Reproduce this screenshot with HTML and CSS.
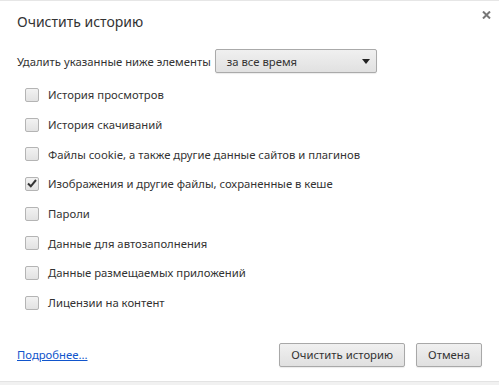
FILE: index.html
```html
<!DOCTYPE html>
<html lang="ru">
<head>
    <meta charset="UTF-8">
    <title>Очистить историю</title>
    <link rel="stylesheet" href="styles.css">
</head>
<body>
    <div class="dialog">
        <header class="dialog-header">
            <h1>Очистить историю</h1>
            <span class="close-btn">
                <svg width="9" height="8" viewBox="0 0 9 8">
                    <path d="M1 0.5 L8 7.5 M8 0.5 L1 7.5" stroke="#777" stroke-width="2"/>
                </svg>
            </span>
        </header>

        <div class="period-row">
            <span>Удалить указанные ниже элементы</span>
            <div class="select-box">
                <span>за все время</span>
                <span class="select-arrow"></span>
            </div>
        </div>

        <ul class="check-list">
            <li><span class="checkbox"></span>История просмотров</li>
            <li><span class="checkbox"></span>История скачиваний</li>
            <li><span class="checkbox"></span>Файлы cookie, а также другие данные сайтов и плагинов</li>
            <li><span class="checkbox checked">
                <svg width="10" height="9" viewBox="0 0 10 9">
                    <path d="M1 4.5 L3.8 7.3 L9 1" fill="none" stroke="#333" stroke-width="2"/>
                </svg>
            </span>Изображения и другие файлы, сохраненные в кеше</li>
            <li><span class="checkbox"></span>Пароли</li>
            <li><span class="checkbox"></span>Данные для автозаполнения</li>
            <li><span class="checkbox"></span>Данные размещаемых приложений</li>
            <li><span class="checkbox"></span>Лицензии на контент</li>
        </ul>

        <footer class="dialog-footer">
            <a href="#" class="more-link">Подробнее...</a>
            <div class="buttons">
                <button class="btn">Очистить историю</button>
                <button class="btn">Отмена</button>
            </div>
        </footer>
    </div>
    <div class="bottom-band"></div>
</body>
</html>
```

FILE: styles.css
```css
body {
    margin: 0;
    font-family: "Noto Sans", "Open Sans", sans-serif;
    font-size: 11.3px;
    color: #333;
    background-color: #fff;
}

.dialog {
    height: 380px;
    border-top: 1px solid #e6e6e6;
    padding: 0 17px;
    box-sizing: content-box;
}

.dialog-header {
    display: flex;
    justify-content: space-between;
    align-items: flex-start;
    padding-top: 11px;
}

.dialog-header h1 {
    margin: 0;
    font-size: 14px;
    font-weight: normal;
    line-height: 20px;
    color: #333;
}

.close-btn {
    margin-top: -1px;
    margin-right: -9px;
    width: 9px;
    height: 8px;
    display: flex;
}

.period-row {
    margin-top: 17px;
    display: flex;
    align-items: center;
    gap: 4px;
    height: 24px;
}

.select-box {
    width: 162px;
    height: 24px;
    box-sizing: border-box;
    border: 1px solid #aaa;
    border-radius: 2px;
    background: linear-gradient(#f0f0f0, #e1e1e1);
    display: flex;
    align-items: center;
    justify-content: space-between;
    padding: 0 6px 0 11px;
    box-shadow: 0 1px 1px rgba(0, 0, 0, 0.08);
}

.select-arrow {
    width: 0;
    height: 0;
    border-left: 4px solid transparent;
    border-right: 4px solid transparent;
    border-top: 5px solid #222;
}

.check-list {
    list-style: none;
    margin: 7px 0 0;
    padding: 0 0 0 8px;
}

.check-list li {
    height: 29.7px;
    display: flex;
    align-items: center;
    gap: 9px;
}

.checkbox {
    width: 12px;
    height: 12px;
    border: 1px solid #b4b4b4;
    border-radius: 2px;
    background: linear-gradient(#f2f2f2, #e2e2e2);
    display: flex;
    align-items: center;
    justify-content: center;
    flex-shrink: 0;
}

.checkbox.checked svg {
    margin-top: -1px;
}

.dialog-footer {
    margin-top: 25px;
    display: flex;
    justify-content: space-between;
    align-items: center;
}

.more-link {
    color: #15c;
    text-decoration: underline;
}

.buttons {
    display: flex;
    gap: 11px;
}

.btn {
    height: 24px;
    padding: 0 11px;
    font-family: inherit;
    font-size: 11.3px;
    color: #333;
    border: 1px solid #a8a8a8;
    border-radius: 2px;
    background: linear-gradient(#f0f0f0, #e0e0e0);
    box-shadow: 0 1px 1px rgba(0, 0, 0, 0.08);
}

.bottom-band {
    height: 3px;
    border-top: 1px solid #e3e3e3;
    background-color: #f1f1f1;
}
```
